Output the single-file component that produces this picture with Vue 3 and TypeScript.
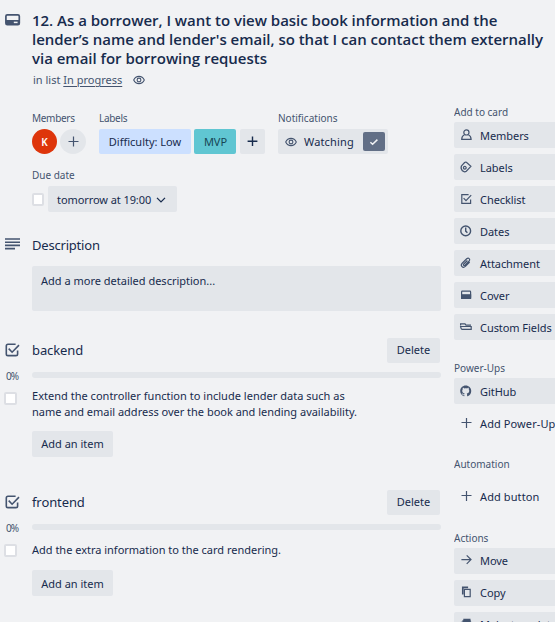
<script setup lang="ts">
interface SideItem { icon: string; label: string; plain?: boolean }
interface SideSection { title: string; items: SideItem[]; loose?: boolean }
interface Checklist { name: string; items: string[][] }

const sections: SideSection[] = [
  {
    title: 'Add to card',
    items: [
      { icon: 'member', label: 'Members' },
      { icon: 'label', label: 'Labels' },
      { icon: 'check', label: 'Checklist' },
      { icon: 'clock', label: 'Dates' },
      { icon: 'clip', label: 'Attachment' },
      { icon: 'cover', label: 'Cover' },
      { icon: 'fields', label: 'Custom Fields' },
    ],
  },
  {
    title: 'Power-Ups',
    items: [
      { icon: 'github', label: 'GitHub' },
      { icon: 'plus', label: 'Add Power-Ups', plain: true },
    ],
  },
  { title: 'Automation', loose: true, items: [{ icon: 'plus', label: 'Add button', plain: true }] },
  {
    title: 'Actions',
    items: [
      { icon: 'move', label: 'Move' },
      { icon: 'copy', label: 'Copy' },
      { icon: 'template', label: 'Make template' },
    ],
  },
]

const checklists: Checklist[] = [
  {
    name: 'backend',
    items: [[
      'Extend the controller function to include lender data such as',
      'name and email address over the book and lending availability.',
    ]],
  },
  { name: 'frontend', items: [['Add the extra information to the card rendering.']] },
]

const titleLines: string[] = [
  '12. As a borrower, I want to view basic book information and the',
  "lender’s name and lender's email, so that I can contact them externally",
  'via email for borrowing requests',
]
</script>

<template>
  <div class="card">
    <header class="head">
      <svg class="head-icon" width="16" height="12" viewBox="0 0 16 12">
        <rect x=".9" y=".9" width="13.4" height="9.8" rx="1.4" fill="none" stroke="#44546f" stroke-width="1.7" />
        <path d="M1 6h13.4V10.4H1z" fill="#44546f" />
        <path d="M8.8 8.4h3.8" stroke="#f1f2f4" stroke-width="1.5" />
      </svg>
      <div>
        <h1><span v-for="l in titleLines" :key="l">{{ l }}</span></h1>
        <p class="in-list">
          <span>in list <u>In progress</u></span>
          <svg width="12" height="10" viewBox="0 0 12 10" fill="none" stroke="#44546f">
            <path d="M.7 5C3 .2 9 .2 11.3 5 9 9.8 3 9.8.7 5z" stroke-width="1.1" />
            <circle cx="6" cy="5" r="1.9" stroke-width="1.1" />
          </svg>
        </p>
      </div>
    </header>

    <div class="body">
      <main>
        <div class="meta">
          <section class="members">
            <h3 class="tight">Members</h3>
            <div class="row">
              <span class="avatar">K</span>
              <span class="avatar add">
                <svg width="11" height="11" viewBox="0 0 11 11"><path d="M5.5.5v10M.5 5.5h10" stroke="#44546f" stroke-width="1.2" /></svg>
              </span>
            </div>
          </section>
          <section class="labels">
            <h3 class="tight">Labels</h3>
            <div class="row">
              <span class="tag low">Difficulty: Low</span>
              <span class="tag mvp">MVP</span>
              <span class="tag plus">
                <svg width="11" height="11" viewBox="0 0 11 11"><path d="M5.5.5v9.6M.6 5.3h9.8" stroke="#172b4d" stroke-width="1.4" /></svg>
              </span>
            </div>
          </section>
          <section class="notes">
            <h3>Notifications</h3>
            <div class="watch">
              <svg width="12" height="10" viewBox="0 0 12 10" fill="none" stroke="#44546f">
                <path d="M.7 5C3 .2 9 .2 11.3 5 9 9.8 3 9.8.7 5z" stroke-width="1.1" />
                <circle cx="6" cy="5" r="1.9" stroke-width="1.1" />
              </svg>
              <span class="watch-text">Watching</span>
              <span class="tick">
                <svg width="10" height="8" viewBox="0 0 10 8"><path d="M1.4 4.2l2.2 2.1L8.4 1.6" fill="none" stroke="#f1f2f4" stroke-width="1.5" /></svg>
              </span>
            </div>
          </section>
        </div>

        <section class="due">
          <h3>Due date</h3>
          <div class="row">
            <span class="box small"></span>
            <span class="date">
              tomorrow at 19:00
              <svg width="10" height="6" viewBox="0 0 10 6"><path d="M1 .9l4 4 4-4" fill="none" stroke="#172b4d" stroke-width="1.3" /></svg>
            </span>
          </div>
        </section>

        <section class="desc">
          <h2>
            <svg width="15" height="12" viewBox="0 0 15 12"><path d="M0 1h15M0 4.2h15M0 7.4h15M0 10.6h10" stroke="#44546f" stroke-width="1.6" /></svg>
            <span>Description</span>
          </h2>
          <div class="placeholder">Add a more detailed description...</div>
        </section>

        <section v-for="list in checklists" :key="list.name" class="checklist">
          <h2>
            <svg width="15" height="14" viewBox="0 0 15 14" fill="none" stroke="#44546f" stroke-width="1.6">
              <path d="M10.6 1.3H3q-1.7 0-1.7 1.7v7.9q0 1.7 1.7 1.7h7.9q1.7 0 1.7-1.7V7.4" />
              <path d="M3.7 5.6l3.4 3.6 6.9-7.1" />
            </svg>
            <span>{{ list.name }}</span>
            <button class="delete">Delete</button>
          </h2>
          <div class="progress"><span class="pct">0%</span><span class="bar"></span></div>
          <div v-for="(item, i) in list.items" :key="i" class="item">
            <span class="box"></span>
            <p><span v-for="line in item" :key="line">{{ line }}</span></p>
          </div>
          <button class="add-item">Add an item</button>
        </section>
      </main>

      <aside>
        <section v-for="s in sections" :key="s.title" :class="{ loose: s.loose }">
          <h3>{{ s.title }}</h3>
          <div v-for="it in s.items" :key="it.label" class="side" :class="{ plain: it.plain }">
            <svg width="14" height="14" viewBox="0 0 14 14" fill="none" stroke="#44546f" stroke-width="1.2">
              <template v-if="it.icon === 'member'">
                <circle cx="7.4" cy="4.4" r="2.6" />
                <path d="M5.4 6.8C3.4 7.8 2.7 9.4 2.7 11.4h9.4c0-2-.7-3.6-2.7-4.6" />
              </template>
              <template v-else-if="it.icon === 'label'">
                <path d="M2.5 5.8L5.6 2.5Q6.5 1.8 7.4 2.3L11.9 6.3 7.3 11.2Q5.4 12.5 3.4 10.8 1.3 8.5 2.5 5.8z" />
                <circle cx="5.8" cy="7.8" r="1.4" />
              </template>
              <template v-else-if="it.icon === 'check'">
                <path d="M9.6 2.6H2.8v8.8h8.8V7.6M4.6 6.2l2.4 2.5 5.2-5.5" />
              </template>
              <template v-else-if="it.icon === 'clock'">
                <circle cx="6.7" cy="6.9" r="4.9" stroke-width="1.4" />
                <path d="M6.7 3.6v3.5l1.7 1.6" stroke-width="1.4" />
              </template>
              <template v-else-if="it.icon === 'clip'">
                <path d="M10.7 6.1L6.4 10.4C3.8 12.6.9 9.8 3.2 7.2L7.7 2.8c1.9-1.5 3.9.4 2.5 2.2L6 9.2C4.8 10 3.9 9 4.8 8L8.4 4.5" />
              </template>
              <template v-else-if="it.icon === 'cover'">
                <rect x="2.6" y="3.2" width="9" height="7" rx=".7" />
                <path d="M2.6 6.8h9v3.6h-9z" fill="#44546f" />
              </template>
              <template v-else-if="it.icon === 'fields'">
                <path d="M1.6 5.6V3.9h4.4l1 1.3h5M1.6 6.5h10.6v2.8H3.2Q2.2 9.3 2 8.2z" />
              </template>
              <g v-else-if="it.icon === 'github'" transform="translate(1.2 1.6) scale(.69)" stroke="none">
                <path fill="#44546f" d="M8 0C3.58 0 0 3.58 0 8c0 3.54 2.29 6.53 5.47 7.59.4.07.55-.17.55-.38 0-.19-.01-.82-.01-1.49-2.01.37-2.53-.49-2.69-.94-.09-.23-.48-.94-.82-1.13-.28-.15-.68-.52-.01-.53.63-.01 1.08.58 1.23.82.72 1.21 1.87.87 2.33.66.07-.52.28-.87.51-1.07-1.78-.2-3.64-.89-3.64-3.95 0-.87.31-1.59.82-2.15-.08-.2-.36-1.02.08-2.12 0 0 .67-.21 2.2.82.64-.18 1.32-.27 2-.27s1.36.09 2 .27c1.53-1.04 2.2-.82 2.2-.82.44 1.1.16 1.92.08 2.12.51.56.82 1.27.82 2.15 0 3.07-1.87 3.75-3.65 3.95.29.25.54.73.54 1.48 0 1.07-.01 1.93-.01 2.2 0 .21.15.46.55.38A8.01 8.01 0 0 0 16 8c0-4.42-3.58-8-8-8z" />
              </g>
              <template v-else-if="it.icon === 'plus'">
                <path d="M7.5 2v10M2.5 6.5h10" />
              </template>
              <template v-else-if="it.icon === 'move'">
                <path d="M2.4 6.6h9.5M7.7 2.3l4.3 4.3-4.3 4.3" />
              </template>
              <template v-else-if="it.icon === 'copy'">
                <path d="M5.4 4.4h5.8v7.2H5.4z" />
                <path d="M3.8 9.4V2.3h5.3" stroke-width="1.7" />
              </template>
              <template v-else>
                <path d="M2.6 5.4h9v6h-9zM4.3 2.6h7.2M3.4 4h8.4" stroke-width="1.5" />
              </template>
            </svg>
            <span>{{ it.label }}</span>
          </div>
        </section>
      </aside>
    </div>
  </div>
</template>

<style>
body { background: #f1f2f4; overflow: hidden; }
</style>

<style scoped>
* { box-sizing: border-box; }
.card { width: 555px; height: 622px; overflow: hidden; background: #f1f2f4; color: #172b4d; font: 400 11px/16px "Noto Sans", "Open Sans", sans-serif; }
h1, h2, h3, p { margin: 0; font-weight: 400; }
svg { display: block; flex: none; }
button { border: 0; border-radius: 2px; background: #e3e6ea; color: inherit; font: inherit; padding: 0; }

.head { display: flex; height: 104px; padding: 11px 0 0 5px; }
.head-icon { margin: 3px 11px 0 0; }
h1 { font: 600 15px/19px "Open Sans", "Noto Sans", sans-serif; letter-spacing: -0.02px; }
h1 span, .item p span { display: block; white-space: nowrap; }
.in-list { display: flex; align-items: center; gap: 11px; margin: 4px 0 0 1px; color: #44546f; }
.in-list u { text-underline-offset: 2px; }

.body { display: flex; gap: 13px; }
main { width: 441px; flex: none; padding-top: 6px; }
h3 { font-size: 10px; line-height: 16px; color: #44546f; }
h3.tight { letter-spacing: -0.3px; }
.meta { display: flex; padding-left: 32px; }
.meta h3 { margin-bottom: 3px; }
.members { width: 67px; }
.labels { width: 179px; }
.row { display: flex; align-items: center; gap: 3px; }
.avatar { display: flex; align-items: center; justify-content: center; width: 25px; height: 25px; border-radius: 50%; background: #de350b; color: #fff; font-size: 10px; font-weight: 600; }
.avatar.add { width: 26px; background: #e3e6ea; }
.tag { display: flex; align-items: center; justify-content: center; height: 25px; border-radius: 2px; }
.low { width: 92px; background: #cce0ff; }
.mvp { width: 42px; padding-left: 1px; background: #60c6d2; color: #164555; }
.plus { width: 25px; margin-left: 1px; background: #e3e6ea; }
.watch { display: flex; align-items: center; width: 110px; height: 25px; padding: 0 3px 0 7px; border-radius: 2px; background: #e3e6ea; }
.watch-text { margin-left: 7px; letter-spacing: 0.15px; }
.tick { display: flex; align-items: center; justify-content: center; width: 22px; height: 19px; margin-left: auto; border-radius: 2px; background: #626f86; }

.due { padding: 13px 0 0 32px; }
.due h3 { margin-bottom: 3px; }
.box { width: 13px; height: 13px; border: 2px solid #dddfe4; border-radius: 2px; background: #fff; flex: none; }
.box.small { width: 12px; margin: 1px 1px 0 0; }
.date { display: flex; align-items: center; gap: 5px; width: 129px; height: 26px; padding: 2px 0 0 9px; border-radius: 2px; background: #e3e6ea; letter-spacing: -0.08px; }

h2 { display: flex; align-items: center; height: 26px; padding-left: 5px; font-size: 13px; line-height: 18px; }
h2 svg { width: 15px; margin-right: 12px; }
.desc { padding-top: 20px; }
.desc h2 span { letter-spacing: -0.2px; }
.desc h2 svg { margin-top: -3px; }
.placeholder { height: 45px; margin: 8px 0 0 32px; padding: 7px 9px; border-radius: 2px; background: #e3e6ea; }
.checklist { padding-top: 26px; }
.checklist h2 span { letter-spacing: -0.1px; }
.checklist + .checklist { padding-top: 32px; }
.delete { width: 53px; height: 25px; margin: 0 1px 0 auto; font-size: 11px; }
.progress { display: flex; align-items: center; height: 16px; margin-top: 4px; padding-left: 6px; }
.pct { width: 26px; padding-top: 1px; font-size: 10px; letter-spacing: -0.9px; color: #44546f; }
.bar { flex: 1; height: 6px; border-radius: 3px; background: #e3e6ea; }
.item { display: flex; gap: 15px; margin-top: 5px; padding-left: 4px; }
.item .box { margin-top: 4px; }
.item p span:first-child { letter-spacing: 0.02px; }
.item p span:last-child { letter-spacing: -0.01px; }
.add-item { display: block; width: 81px; height: 26px; margin: 11px 0 0 32px; }
.checklist + .checklist .item { margin-top: 7px; }
.checklist + .checklist .box { margin-top: 2px; }
.checklist + .checklist .add-item { margin-top: 12px; padding-top: 2px; }

aside { flex: 1; min-width: 0; overflow: hidden; }
aside h3 { margin-bottom: 2px; white-space: nowrap; }
aside section { margin-bottom: 20px; }
.side { display: flex; align-items: center; gap: 7px; width: 112px; height: 26px; margin-bottom: 6px; padding: 1px 0 0 6px; border-radius: 2px; background: #e3e6ea; white-space: nowrap; letter-spacing: -0.06px; }
.side svg { margin: -1px 0 0 -1px; }
.side.plain { background: none; letter-spacing: 0.1px; }
aside .loose { margin-bottom: 21px; }
.loose h3 { margin-bottom: 11px; }
aside section:last-child .side { padding: 0 0 1px 6px; }
</style>
